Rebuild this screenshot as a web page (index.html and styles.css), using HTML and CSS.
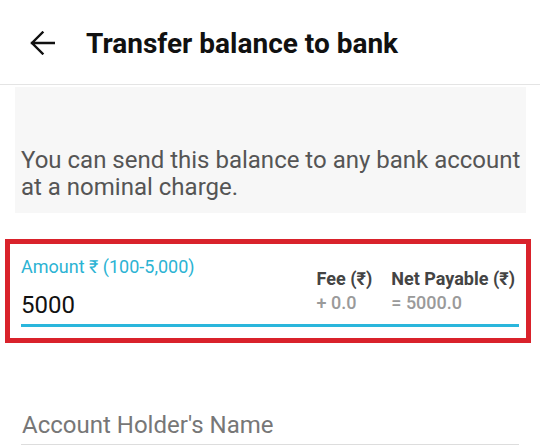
FILE: index.html
```html
<!DOCTYPE html>
<html lang="en">
<head>
  <meta charset="UTF-8">
  <meta name="viewport" content="width=device-width, initial-scale=1.0">
  <title>Transfer balance to bank</title>
  <link rel="stylesheet" href="styles.css">
</head>
<body>
  <div class="header">
    <svg class="back" width="25" height="24" viewBox="0 0 25 24">
      <path d="M2 12H24.5M12.5 1.5L2 12L12.5 22.5" fill="none" stroke="#111" stroke-width="2.4" stroke-linecap="square"/>
    </svg>
    <h1 class="title">Transfer balance to bank</h1>
  </div>

  <div class="info">
    You can send this balance to any bank account at a nominal charge.
  </div>

  <div class="amount-box">
    <div class="field">
      <div class="amount">
        <div class="label">Amount ₹ (100-5,000)</div>
        <div class="value">5000</div>
      </div>
      <div class="charges">
        <div class="charge">
          <div class="charge-title">Fee (₹)</div>
          <div class="charge-value">+ 0.0</div>
        </div>
        <div class="charge">
          <div class="charge-title">Net Payable (₹)</div>
          <div class="charge-value">= 5000.0</div>
        </div>
      </div>
    </div>
  </div>

  <div class="name-field">Account Holder's Name</div>
</body>
</html>
```

FILE: styles.css
```css
body, html {
  margin: 0;
  padding: 0;
  height: 100%;
  overflow: hidden;
  background-color: #ffffff;
  font-family: Roboto, "Liberation Sans", sans-serif;
}

.header {
  display: flex;
  align-items: flex-start;
  height: 85px;
  padding: 28px 0 0 30px;
  box-sizing: border-box;
  border-bottom: 1px solid #e4e4e4;
}

.back {
  flex: none;
  margin: 3px 31px 0 0;
}

.title {
  margin: 0;
  font-size: 28px;
  line-height: 32px;
  font-weight: 700;
  color: #111111;
}

.info {
  margin: 2px 14px 0 15px;
  padding: 60px 0 12px 6px;
  background-color: #f7f7f7;
  color: #555555;
  font-size: 24px;
  line-height: 27px;
}

.amount-box {
  margin: 26px 9px 0 5px;
  border: 5px solid #d9222b;
  padding: 12px 7px 11px 11px;
}

.field {
  display: flex;
  justify-content: space-between;
  border-bottom: 3px solid #2ab6dc;
  padding-bottom: 5px;
}

.label {
  font-size: 18px;
  line-height: 21px;
  color: #2bb3d3;
}

.value {
  margin-top: 14px;
  font-size: 24px;
  line-height: 28px;
  color: #111111;
}

.charges {
  display: flex;
  gap: 19px;
  margin-top: 12px;
  padding-right: 4px;
}

.charge-title {
  font-size: 18px;
  line-height: 21px;
  font-weight: 700;
  color: #444444;
}

.charge-value {
  margin-top: 3px;
  font-size: 18px;
  line-height: 21px;
  font-weight: 500;
  color: #9a9a9a;
}

.name-field {
  margin: 68px 21px 0 21px;
  padding: 0 0 5px 1px;
  border-bottom: 1px solid #dddddd;
  font-size: 24px;
  line-height: 28px;
  color: #777777;
}
```
